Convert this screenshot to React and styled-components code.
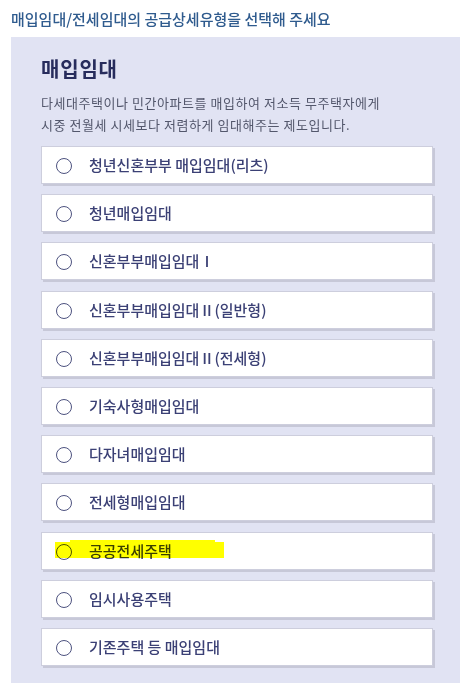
import React from "react";
import styled, { createGlobalStyle } from "styled-components";

const Global = createGlobalStyle`
  html, body { margin: 0; padding: 0; background: #ffffff; }
  body { font-family: "Noto Sans CJK KR", "Noto Sans", sans-serif; }
`;

const Page = styled.div`
  width: 460px;
  height: 684px;
  display: flex;
  flex-direction: column;
  overflow: hidden;
`;

const Heading = styled.h2`
  margin: 0;
  padding: 8px 0 0 11px;
  height: 29px;
  font-size: 15px;
  line-height: 22px;
  font-weight: 500;
  letter-spacing: 0;
  color: #2f5b8e;
`;

const Panel = styled.section`
  margin-left: 11px;
  flex: 1;
  margin-bottom: 1px;
  background: #e1e3f3;
  padding: 18px 27px 0 30px;
  display: flex;
  flex-direction: column;
`;

const Title = styled.h3`
  margin: 0;
  font-size: 20px;
  line-height: 28px;
  font-weight: 700;
  letter-spacing: 0.8px;
  color: #272c5c;
`;

const Desc = styled.p`
  margin: 9px 0 10px;
  font-size: 13px;
  line-height: 22px;
  letter-spacing: 0.55px;
  color: #53576c;
`;

const List = styled.div`
  display: flex;
  flex-direction: column;
  gap: 10.2px;
`;

const Option = styled.label`
  position: relative;
  box-sizing: border-box;
  height: 38px;
  background: #ffffff;
  border: 1px solid #cdcedd;
  box-shadow: 2px 2px 0 #c7c8d8;
  display: flex;
  align-items: center;
  padding-left: 14px;
  gap: 17px;
  cursor: pointer;
`;

const Radio = styled.span`
  box-sizing: border-box;
  width: 16px;
  height: 16px;
  border-radius: 50%;
  border: 1.3px solid #4d527f;
  flex: none;
  margin-top: 2px;
`;

const Label = styled.span`
  font-size: 15px;
  line-height: 20px;
  font-weight: 500;
  letter-spacing: 0;
  color: #3b4075;
`;

const Marker = styled.span`
  position: absolute;
  left: 13px;
  top: 9px;
  width: 169px;
  height: 16px;
  background: #ffff00;
  mix-blend-mode: multiply;
  pointer-events: none;
  &::before {
    content: "";
    position: absolute;
    left: 15px;
    top: -2px;
    width: 145px;
    height: 2px;
    background: #ffff00;
  }
`;

const options = [
  "청년신혼부부 매입임대(리츠)",
  "청년매입임대",
  "신혼부부매입임대Ⅰ",
  "신혼부부매입임대Ⅱ(일반형)",
  "신혼부부매입임대Ⅱ(전세형)",
  "기숙사형매입임대",
  "다자녀매입임대",
  "전세형매입임대",
  "공공전세주택",
  "임시사용주택",
  "기존주택 등 매입임대",
];

export default function App() {
  return (
    <>
      <Global />
      <Page>
        <Heading>매입임대/전세임대의 공급상세유형을 선택해 주세요</Heading>
        <Panel>
          <Title>매입임대</Title>
          <Desc>
            다세대주택이나 민간아파트를 매입하여 저소득 무주택자에게
            <br />
            시중 전월세 시세보다 저렴하게 임대해주는 제도입니다.
          </Desc>
          <List>
            {options.map((o) => (
              <Option key={o}>
                <Radio />
                <Label>{o}</Label>
                {o === "공공전세주택" && <Marker />}
              </Option>
            ))}
          </List>
        </Panel>
      </Page>
    </>
  );
}
